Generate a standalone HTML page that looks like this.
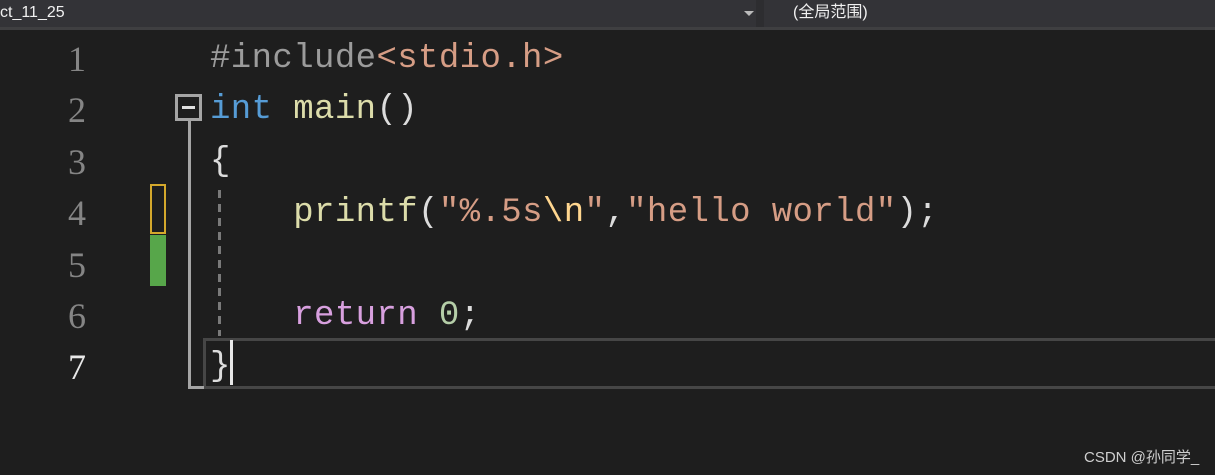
<!DOCTYPE html>
<html><head><meta charset="utf-8"><style>
html,body{margin:0;padding:0;width:1215px;height:475px;overflow:hidden;background:#1e1e1e}
.hdr{position:absolute;left:0;top:0;width:1215px;height:27px;background:#2d2d30;border-bottom:3px solid #3f3f41}
.dd{position:absolute;top:0;height:27px;background:#333337;color:#f1f1f1;font:16px "Liberation Sans","Noto Sans CJK SC",sans-serif;line-height:26px}
.ln{position:absolute;left:0;width:86px;text-align:right;color:#858585;font:36px "Liberation Serif",serif;line-height:52px}
.code{position:absolute;left:210px;font:34px "Liberation Mono",monospace;letter-spacing:0.4px;line-height:52px;white-space:pre;color:#dcdcdc}
.abs{position:absolute}
</style></head><body>
<div class="hdr"></div>
<div class="dd" style="left:0;width:756px">ct_11_25<span style="position:absolute;left:744px;top:11px;width:0;height:0;border-left:5px solid transparent;border-right:5px solid transparent;border-top:5px solid #bbb"></span></div>
<div class="dd" style="left:764px;width:451px;padding-left:29px;box-sizing:border-box">(全局范围)</div>

<div class="ln" style="top:33px">1</div>
<div class="ln" style="top:84px">2</div>
<div class="ln" style="top:136px">3</div>
<div class="ln" style="top:187px">4</div>
<div class="ln" style="top:239px">5</div>
<div class="ln" style="top:290px">6</div>
<div class="ln" style="top:341px;color:#e8e8e8">7</div>

<div class="abs" style="left:203px;top:338px;width:1020px;height:45px;border:3px solid #464646"></div>
<div class="abs" style="left:175px;top:94px;width:21px;height:21px;border:3px solid #a5a5a5"><div class="abs" style="left:4px;top:9px;width:13px;height:3px;background:#e0e0e0"></div></div>
<div class="abs" style="left:188px;top:121px;width:3px;height:268px;background:#a5a5a5"></div>
<div class="abs" style="left:188px;top:386px;width:16px;height:3px;background:#a5a5a5"></div>
<div class="abs" style="left:218px;top:190px;width:3px;height:146px;background:repeating-linear-gradient(#7a7a7a 0 8px,transparent 8px 14px)"></div>
<div class="abs" style="left:150px;top:184px;width:12px;height:46px;border:2px solid #d4a82c"></div>
<div class="abs" style="left:150px;top:235px;width:16px;height:51px;background:#57a64a"></div>
<div class="abs" style="left:230px;top:340px;width:3px;height:45px;background:#e8e8e8"></div>

<div class="code" style="top:33px"><span style="color:#9b9b9b">#include</span><span style="color:#d69d85">&lt;stdio.h&gt;</span></div>
<div class="code" style="top:84px"><span style="color:#569cd6">int</span> <span style="color:#dcdcaa">main</span>()</div>
<div class="code" style="top:136px">{</div>
<div class="code" style="top:187px">    <span style="color:#dcdcaa">printf</span>(<span style="color:#d69d85">"%.5s</span><span style="color:#ffd68f">\n</span><span style="color:#d69d85">"</span>,<span style="color:#d69d85">"hello world"</span>);</div>
<div class="code" style="top:290px">    <span style="color:#d8a0df">return</span> <span style="color:#b5cea8">0</span>;</div>
<div class="code" style="top:341px">}</div>

<div class="abs" style="left:1084px;top:446px;color:#cfcfcf;font:15px 'Liberation Sans','Noto Sans CJK SC',sans-serif">CSDN @孙同学_</div>
</body></html>
